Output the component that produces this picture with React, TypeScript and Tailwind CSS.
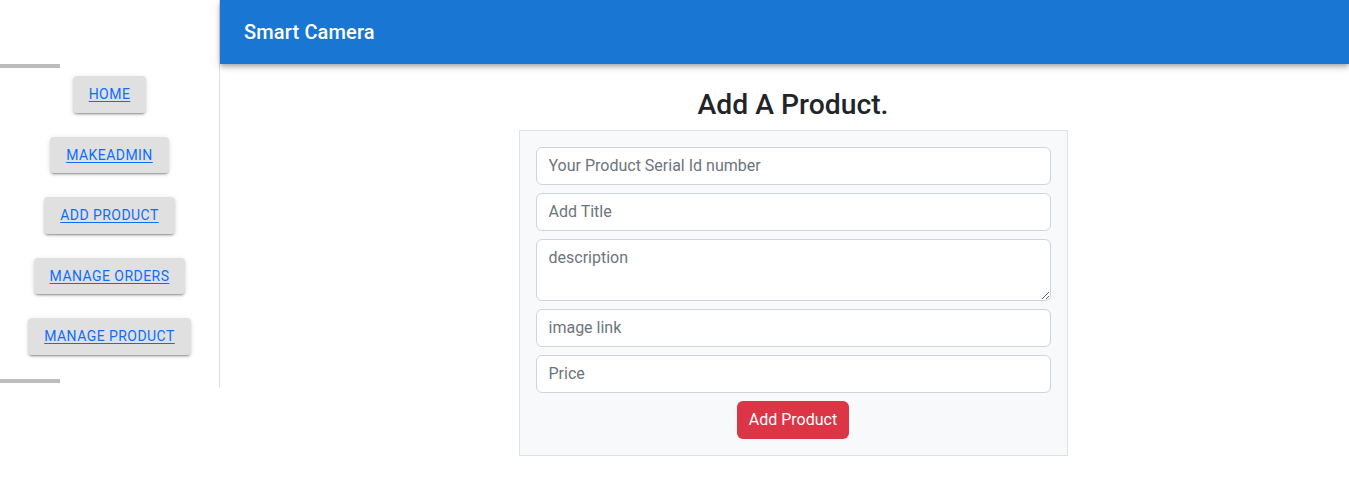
const navLinks = ['Home', 'MakeAdmin', 'Add Product', 'Manage Orders', 'Manage Product'];

function Sidebar() {
  return (
    <div className="w-[220px] shrink-0 h-[388px] border-r border-[#e0e0e0] flex flex-col">
      <div className="h-16" />
      <div className="w-[60px] h-1 bg-[#bdbdbd]" />
      <div className="flex flex-col items-center gap-6 pt-2 pb-6">
        {navLinks.map((label) => (
          <button
            key={label}
            className="h-[36.5px] px-4 rounded bg-[#e0e0e0] text-sm font-normal uppercase tracking-[0.45px] leading-[24.5px] shadow-[0px_3px_1px_-2px_rgba(0,0,0,0.2),0px_2px_2px_0px_rgba(0,0,0,0.14),0px_1px_5px_0px_rgba(0,0,0,0.12)]"
          >
            <a href="#" className="text-[#0d6efd] underline underline-offset-2">
              {label}
            </a>
          </button>
        ))}
      </div>
      <div className="w-[60px] h-1 bg-[#bdbdbd]" />
    </div>
  );
}

function AddProductForm() {
  const inputClass =
    'block w-full h-[38px] px-3 py-1.5 text-base leading-6 text-[#212529] bg-white border border-[#ced4da] rounded-md placeholder:text-[#6c757d] outline-none';

  return (
    <div className="w-[549px] mx-auto">
      <h3 className="text-center text-[28.3px] font-medium leading-[1.2] text-[#212529] mb-2">Add A Product.</h3>
      <form className="bg-[#f8f9fa] border border-[#dee2e6] p-4 flex flex-col gap-2">
        <input className={inputClass} placeholder="Your Product Serial Id number" />
        <input className={inputClass} placeholder="Add Title" />
        <textarea
          rows={2}
          className="block w-full h-[62px] px-3 py-1.5 text-base leading-6 text-[#212529] bg-white border border-[#ced4da] rounded-md placeholder:text-[#6c757d] outline-none"
          placeholder="description"
        />
        <input className={inputClass} placeholder="image link" />
        <input className={inputClass} placeholder="Price" />
        <div className="flex justify-center">
          <button type="button" className="h-[38px] px-3 bg-[#dc3545] text-white text-base leading-6 rounded-md">
            Add Product
          </button>
        </div>
      </form>
    </div>
  );
}

export default function App() {
  return (
    <div className="flex min-h-[480px] bg-white font-['Roboto',sans-serif]">
      <Sidebar />
      <div className="flex-1 flex flex-col">
        <header className="h-16 bg-[#1976d2] flex items-center px-6 shadow-[0px_2px_4px_-1px_rgba(0,0,0,0.2),0px_4px_5px_0px_rgba(0,0,0,0.14),0px_1px_10px_0px_rgba(0,0,0,0.12)] relative z-10">
          <h6 className="text-white text-xl font-medium tracking-[0.15px]">Smart Camera</h6>
        </header>
        <main className="pt-6 pl-[41px] pr-6">
          <AddProductForm />
        </main>
      </div>
    </div>
  );
}
